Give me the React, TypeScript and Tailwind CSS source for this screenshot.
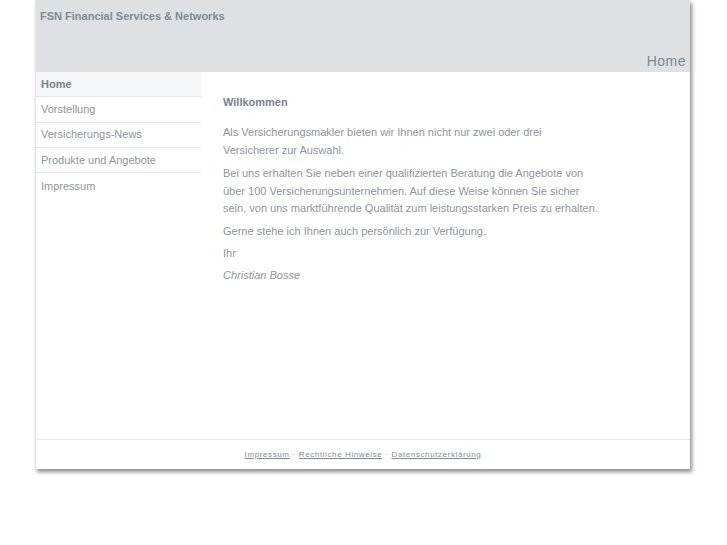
import React from "react";

const nav = ["Home", "Vorstellung", "Versicherungs-News", "Produkte und Angebote", "Impressum"];

export default function App() {
  return (
    <div className="min-h-[545px] bg-white text-[11px] text-[#8c969e]" style={{ fontFamily: '"Liberation Sans", Arial, sans-serif' }}>
      <div className="ml-[35px] w-[655px] border-l border-[#e3e6e8] bg-white shadow-[2px_3px_4px_rgba(0,0,0,0.45)]">
        <div className="flex h-[72px] flex-col justify-between bg-[#dde1e4] pl-[4px] pr-[4px]">
          <div className="pt-[8px] font-bold text-[#7e8b96]">FSN Financial Services &amp; Networks</div>
          <div className="pb-0 text-right text-[14px] tracking-[0.5px] text-[#7b8995]">Home</div>
        </div>
        <div className="flex h-[367px]">
          <div className="w-[165px]">
            {nav.map((n, i) => (
              <div
                key={n}
                className={
                  "flex h-[25.3px] items-center border-b pl-[5px] " +
                  (i === 0 ? "bg-[#f5f6f7] border-[#e1e5e8] font-bold text-[#76838e]" : "border-[#e8ebed] ") +
                  (i === nav.length - 1 ? "border-b-0" : "")
                }
              >
                {n}
              </div>
            ))}
          </div>
          <div className="w-[440px] whitespace-nowrap pl-[22px] pt-[21px] leading-[18px]">
            <div className="mb-[12px] font-bold text-[#76838e]">Willkommen</div>
            <p className="mb-[6px]">
              Als Versicherungsmakler bieten wir Ihnen nicht nur zwei oder drei
              <br />
              Versicherer zur Auswahl.
            </p>
            <p className="mb-[4px] leading-[17.5px]">
              Bei uns erhalten Sie neben einer qualifizierten Beratung die Angebote von
              <br />
              über 100 Versicherungsunternehmen. Auf diese Weise können Sie sicher
              <br />
              sein, von uns marktführende Qualität zum leistungsstarken Preis zu erhalten.
            </p>
            <p className="mb-[4px]">Gerne stehe ich Ihnen auch persönlich zur Verfügung.</p>
            <p className="mb-[4px]">Ihr</p>
            <p className="italic">Christian Bosse</p>
          </div>
        </div>
        <div className="flex h-[30px] items-center justify-center border-t border-[#e6e9eb] text-[8px] tracking-[0.6px] text-[#7f8c97]">
          <a className="underline">Impressum</a>
          <span className="mx-[3px]">·</span>
          <a className="underline">Rechtliche Hinweise</a>
          <span className="mx-[3px]">·</span>
          <a className="underline">Datenschutzerklärung</a>
        </div>
      </div>
    </div>
  );
}
